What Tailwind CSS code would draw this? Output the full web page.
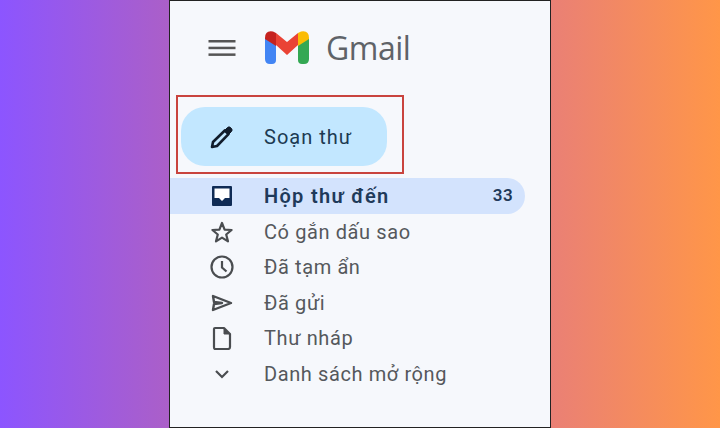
<!DOCTYPE html>
<html>
<head>
<meta charset="utf-8">
<script src="https://cdn.jsdelivr.net/npm/@tailwindcss/browser@4"></script>
</head>
<body class="m-0">
<div class="flex justify-center w-[720px] h-[428px] overflow-hidden bg-[linear-gradient(to_right,#8c55ff_0%,#ab5fc8_23.5%,#ea8075_76.7%,#ff9648_100%)] font-['Roboto',sans-serif]">
    <div class="w-[382px] h-full border border-[#222] bg-[#f6f8fc] flex flex-col">
        <!-- Header -->
        <div class="flex items-center h-[94px] pl-[38px] pb-px">
            <svg class="w-[28px] h-[20px] text-[#555]" viewBox="0 0 28 20" fill="currentColor">
                <rect x="0.5" y="2" width="27" height="2.5"></rect>
                <rect x="0.5" y="8.7" width="27" height="2.5"></rect>
                <rect x="0.5" y="15.4" width="27" height="2.5"></rect>
            </svg>
            <svg class="w-[46px] h-[35px] ml-[28px]" viewBox="0 0 46 35" fill="none">
                <path d="M1 8 V29 Q1 34 6 34 H8 Q12 34 12 30 V14 Z" fill="#4285f4"></path>
                <path d="M45 8 V29 Q45 34 40 34 H38 Q34 34 34 30 V14 Z" fill="#34a853"></path>
                <path d="M34 3 L37 1.5 Q45 0 45 8 V9 L34 16 Z" fill="#fbbc04"></path>
                <path d="M12 3 L23 12 L34 3 V15 L23 25 L12 15 Z" fill="#ea4335"></path>
                <path d="M1 9 V8 Q1 0 9 1.5 L12 3 V16 Z" fill="#c5221f"></path>
            </svg>
            <span class="ml-[16px] text-[32px] leading-none text-[#5f6368] font-['Open_Sans',sans-serif] tracking-[-0.5px]">Gmail</span>
        </div>

        <!-- Compose -->
        <div class="ml-[6px] w-[228px] h-[79px] border-2 border-[#c9443e] p-[2px] pl-[3px]">
            <div class="flex items-center w-[206px] h-[59px] mt-[8px] rounded-[24px] bg-[#c2e7ff] text-[#1c3a52]">
                <svg class="w-[24px] h-[24px] ml-[29px]" viewBox="0 0 24 24" fill="none" stroke="#111c2b" stroke-width="2.6">
                    <path d="M2 22 L3 17 L14.8 5.5 L18.5 9.2 L7 21 Z" stroke-linejoin="round"></path>
                    <path d="M15 5 L17.5 2.5 Q19 1 21 3 Q23 5 21.5 6.5 L19 9 Z" fill="#111c2b" stroke-width="1"></path>
                </svg>
                <span class="ml-[30px] text-[20px] tracking-[1px]">Soạn thư</span>
            </div>
        </div>

        <!-- Nav -->
        <nav class="mt-[4px] flex flex-col text-[20px] tracking-[0.6px] text-[#55585c]">
            <a class="flex items-center w-[355px] h-[36px] rounded-r-full bg-[#d3e3fd] text-[#1f3a5a] font-semibold">
                <span class="w-[94px] pl-[40px]">
                    <svg class="w-[24px] h-[24px]" viewBox="0 0 24 24">
                        <rect x="3" y="3" width="18" height="18" fill="#fff"></rect>
                        <path d="M3 2 H21 Q22 2 22 3 V21 Q22 22 21 22 H3 Q2 22 2 21 V3 Q2 2 3 2 Z M4.5 4.5 V14 H9 L12 17 L15 14 H19.5 V4.5 Z" fill="#0f2b55" fill-rule="evenodd"></path>
                    </svg>
                </span>
                <span class="flex-1 tracking-[1.3px]">Hộp thư đến</span>
                <span class="mr-[12px] text-[17px] tracking-[0.4px]">33</span>
            </a>
            <a class="flex items-center h-[35.5px]">
                <span class="w-[94px] pl-[40px]">
                    <svg class="w-[24px] h-[24px]" viewBox="0 0 24 24" fill="none" stroke="#4a4d50" stroke-width="2.2"><path d="M12 3 L14.6 9.6 L21.6 10 L16.2 14.5 L18 21.4 L12 17.6 L6 21.4 L7.8 14.5 L2.4 10 L9.4 9.6 Z" stroke-linejoin="round"></path></svg>
                </span>
                <span>Có gắn dấu sao</span>
            </a>
            <a class="flex items-center h-[35.5px]">
                <span class="w-[94px] pl-[40px]">
                    <svg class="w-[24px] h-[24px]" viewBox="0 0 24 24" fill="none" stroke="#4a4d50" stroke-width="2.2"><circle cx="12" cy="12" r="10.5"></circle><path d="M12 6 V12.5 L16.5 16.5"></path></svg>
                </span>
                <span>Đã tạm ẩn</span>
            </a>
            <a class="flex items-center h-[35.5px]">
                <span class="w-[94px] pl-[40px]">
                    <svg class="w-[24px] h-[24px]" viewBox="0 0 24 24" fill="none" stroke="#4a4d50" stroke-width="2.4"><path d="M3 5 L21 12 L3 19 L4 13 L12 12 L4 11 Z" stroke-linejoin="round"></path></svg>
                </span>
                <span>Đã gửi</span>
            </a>
            <a class="flex items-center h-[35.5px]">
                <span class="w-[94px] pl-[40px]">
                    <svg class="w-[24px] h-[24px]" viewBox="0 0 24 24" fill="none" stroke="#4a4d50" stroke-width="2.2"><path d="M5 2 H14 L20 8 V21 Q20 23 18 23 H5 Q4 23 4 21 V3 Q4 2 5 2 Z" stroke-linejoin="round"></path><path d="M14 2 L20 8 H14 Z" fill="#4a4d50" stroke-width="1"></path></svg>
                </span>
                <span>Thư nháp</span>
            </a>
            <a class="flex items-center h-[35.5px]">
                <span class="w-[94px] pl-[40px]">
                    <svg class="w-[24px] h-[24px]" viewBox="0 0 24 24" fill="none" stroke="#4a4d50" stroke-width="2.2"><path d="M6 9 L12 15 L18 9"></path></svg>
                </span>
                <span>Danh sách mở rộng</span>
            </a>
        </nav>
    </div>
</div>
</body>
</html>
